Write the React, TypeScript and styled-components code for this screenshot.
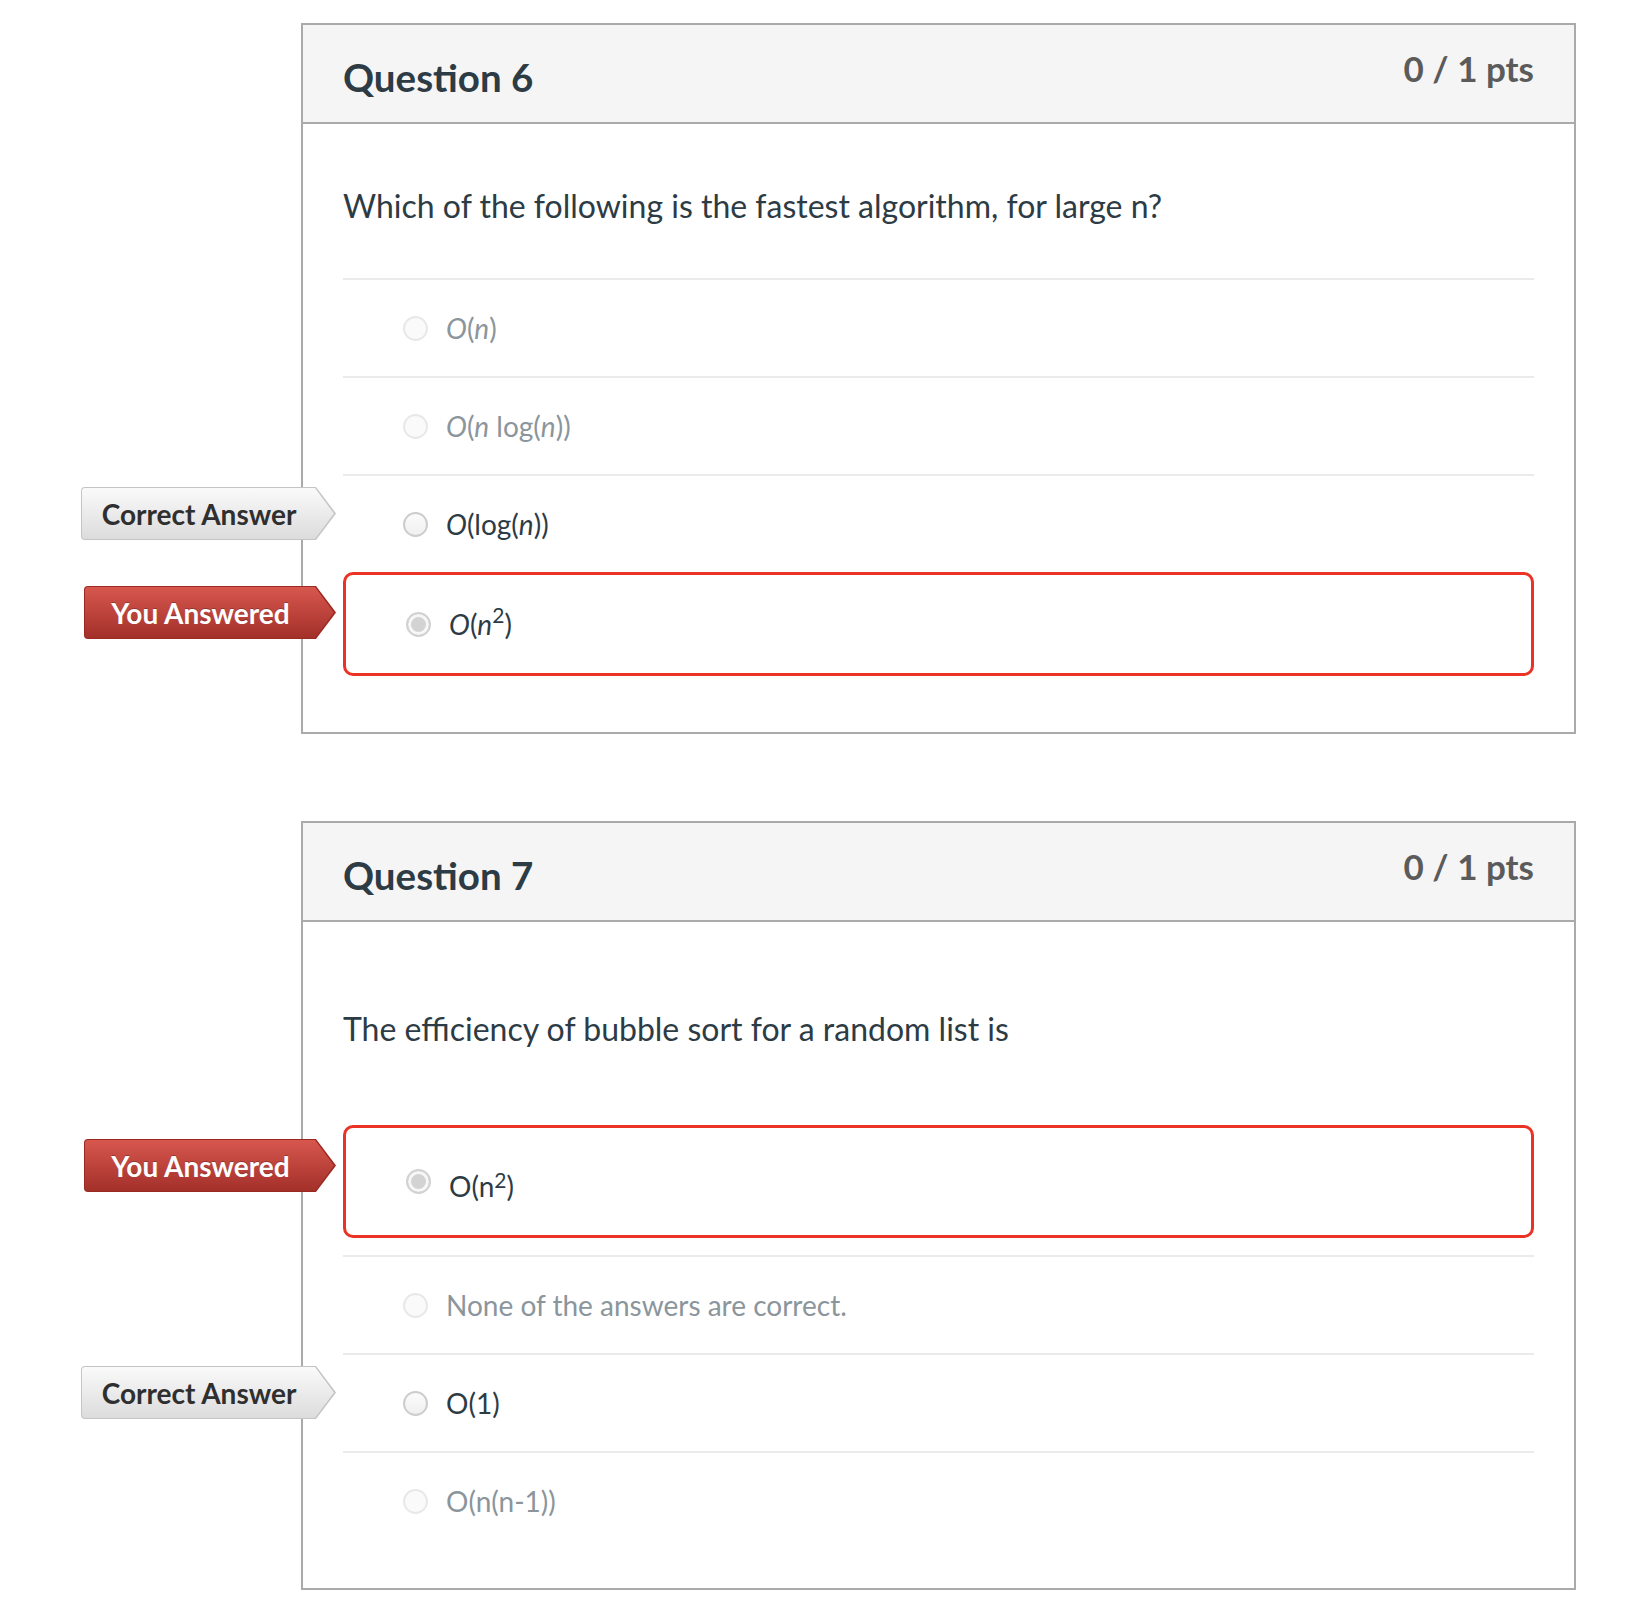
import React from 'react'
import styled, { createGlobalStyle, css } from 'styled-components'

const GlobalStyle = createGlobalStyle`
  html, body {
    margin: 0;
    padding: 0;
    background: #fff;
  }
  body {
    font-family: Lato, 'Liberation Sans', sans-serif;
    color: #2d3b45;
  }
  * {
    box-sizing: border-box;
  }
`

const Page = styled.div`
  display: flex;
  flex-direction: column;
  gap: 87px;
  padding: 23px 0 40px 301px;
`

const Card = styled.section`
  width: 1275px;
  border: 2px solid #aaaaaa;
  background: #fff;
`

const CardHeader = styled.header`
  display: flex;
  justify-content: space-between;
  align-items: flex-start;
  height: 99px;
  padding: 0 40px;
  background: #f5f5f5;
  border-bottom: 2px solid #aaaaaa;
`

const Title = styled.h2`
  margin: 30px 0 0;
  font-size: 38.5px;
  line-height: 44px;
  font-weight: 700;
  color: #2d3b45;
`

const Points = styled.div`
  margin-top: 23px;
  font-size: 35px;
  line-height: 40px;
  font-weight: 700;
  color: #5b5b5b;
`

const CardBody = styled.div`
  padding: 0 40px 39px;
`

const QuestionText = styled.p<{ $spaced?: boolean }>`
  margin: ${(p) => (p.$spaced ? '83px 0 72px' : '58px 0 48px')};
  font-size: 32px;
  line-height: 48px;
`

const AnswerList = styled.div`
  display: flex;
  flex-direction: column;
`

const AnswerRow = styled.div<{ $chosen?: boolean; $faded?: boolean }>`
  position: relative;
  display: flex;
  align-items: center;
  gap: 18px;
  padding: 26px 0 26px 60px;
  font-size: 28px;
  line-height: 44px;
  color: ${(p) => (p.$faded ? '#8b959c' : '#2d3b45')};
  border-top: 2px solid #ebebeb;

  ${(p) =>
    p.$chosen &&
    css`
      padding: 27px 0 27px 60px;
      border: 3px solid #ea3324;
      border-radius: 10px;
      margin-bottom: 17px;
    `}
`

const Radio = styled.span<{ $state: 'faded' | 'normal' | 'selected' }>`
  flex-shrink: 0;
  width: 25px;
  height: 25px;
  border-radius: 50%;
  ${(p) =>
    p.$state === 'faded'
      ? css`
          border: 2px solid #e8e8e8;
          background: #fafafa;
        `
      : p.$state === 'normal'
      ? css`
          border: 2px solid #cdcdcd;
          background: linear-gradient(#fbfbfb, #f0f0f0);
        `
      : css`
          border: 2px solid #d2d2d2;
          background: #d3d3d3;
          box-shadow: inset 0 0 0 3px #f7f7f7;
        `}
`

const Var = styled.i`
  font-style: italic;
`

const Sup = styled.sup<{ $math?: boolean }>`
  font-size: 0.75em;
  ${(p) =>
    p.$math
      ? css`
          line-height: 0;
          vertical-align: 0.55em;
        `
      : css`
          line-height: 50px;
          vertical-align: 9px;
        `}
`

const Badge = styled.div<{ $kind: 'correct' | 'yours'; $boxed?: boolean }>`
  position: absolute;
  top: 11px;
  right: ${(p) => (p.$boxed ? 'calc(100% + 10px)' : 'calc(100% + 7px)')};
  width: ${(p) => (p.$kind === 'correct' ? '255px' : '252px')};
  height: 53px;
  padding: 1px;
  border-radius: 4px 0 0 4px;
  clip-path: polygon(0 0, calc(100% - 20px) 0, 100% 50%, calc(100% - 20px) 100%, 0 100%);
  background: ${(p) => (p.$kind === 'correct' ? '#c4c4c4' : '#9a2922')};
`

const BadgeFace = styled.div<{ $kind: 'correct' | 'yours' }>`
  display: flex;
  align-items: center;
  justify-content: center;
  height: 100%;
  padding-right: 19px;
  border-radius: 3px 0 0 3px;
  clip-path: polygon(0 0, calc(100% - 20px) 0, calc(100% - 1px) 50%, calc(100% - 20px) 100%, 0 100%);
  font-size: 28px;
  font-weight: 700;
  line-height: 1;
  white-space: nowrap;
  ${(p) =>
    p.$kind === 'correct'
      ? css`
          background: linear-gradient(#fafafa, #dcdcdc);
          color: #2f2f2f;
        `
      : css`
          background: linear-gradient(#d7574e, #a3302a);
          color: #fff;
          text-shadow: 0 -1px 0 rgba(0, 0, 0, 0.25);
        `}
`

type Answer = {
  content: React.ReactNode
  state: 'faded' | 'normal' | 'selected'
  badge?: 'correct' | 'yours'
}

const badgeText = {
  correct: 'Correct Answer',
  yours: 'You Answered',
}

const AnswerItem = ({ answer }: { answer: Answer }) => {
  const chosen = answer.state === 'selected'
  return (
    <AnswerRow $chosen={chosen} $faded={answer.state === 'faded'}>
      {answer.badge && (
        <Badge $kind={answer.badge} $boxed={chosen}>
          <BadgeFace $kind={answer.badge}>{badgeText[answer.badge]}</BadgeFace>
        </Badge>
      )}
      <Radio $state={answer.state} />
      <span>{answer.content}</span>
    </AnswerRow>
  )
}

const QuestionCard = ({
  number,
  points,
  text,
  spaced,
  answers,
}: {
  number: number
  points: string
  text: string
  spaced?: boolean
  answers: Answer[]
}) => (
  <Card>
    <CardHeader>
      <Title>Question {number}</Title>
      <Points>{points}</Points>
    </CardHeader>
    <CardBody>
      <QuestionText $spaced={spaced}>{text}</QuestionText>
      <AnswerList>
        {answers.map((a, i) => (
          <AnswerItem key={i} answer={a} />
        ))}
      </AnswerList>
    </CardBody>
  </Card>
)

const q6: Answer[] = [
  {
    state: 'faded',
    content: (
      <>
        <Var>O</Var>(<Var>n</Var>)
      </>
    ),
  },
  {
    state: 'faded',
    content: (
      <>
        <Var>O</Var>(<Var>n</Var> log(<Var>n</Var>))
      </>
    ),
  },
  {
    state: 'normal',
    badge: 'correct',
    content: (
      <>
        <Var>O</Var>(log(<Var>n</Var>))
      </>
    ),
  },
  {
    state: 'selected',
    badge: 'yours',
    content: (
      <>
        <Var>O</Var>(<Var>n</Var>
        <Sup $math>2</Sup>)
      </>
    ),
  },
]

const q7: Answer[] = [
  {
    state: 'selected',
    badge: 'yours',
    content: (
      <>
        O(n<Sup>2</Sup>)
      </>
    ),
  },
  { state: 'faded', content: 'None of the answers are correct.' },
  { state: 'normal', badge: 'correct', content: 'O(1)' },
  { state: 'faded', content: 'O(n(n-1))' },
]

export default function App() {
  return (
    <>
      <GlobalStyle />
      <Page>
        <QuestionCard
          number={6}
          points="0 / 1 pts"
          text="Which of the following is the fastest algorithm, for large n?"
          answers={q6}
        />
        <QuestionCard
          number={7}
          points="0 / 1 pts"
          text="The efficiency of bubble sort for a random list is"
          spaced
          answers={q7}
        />
      </Page>
    </>
  )
}
